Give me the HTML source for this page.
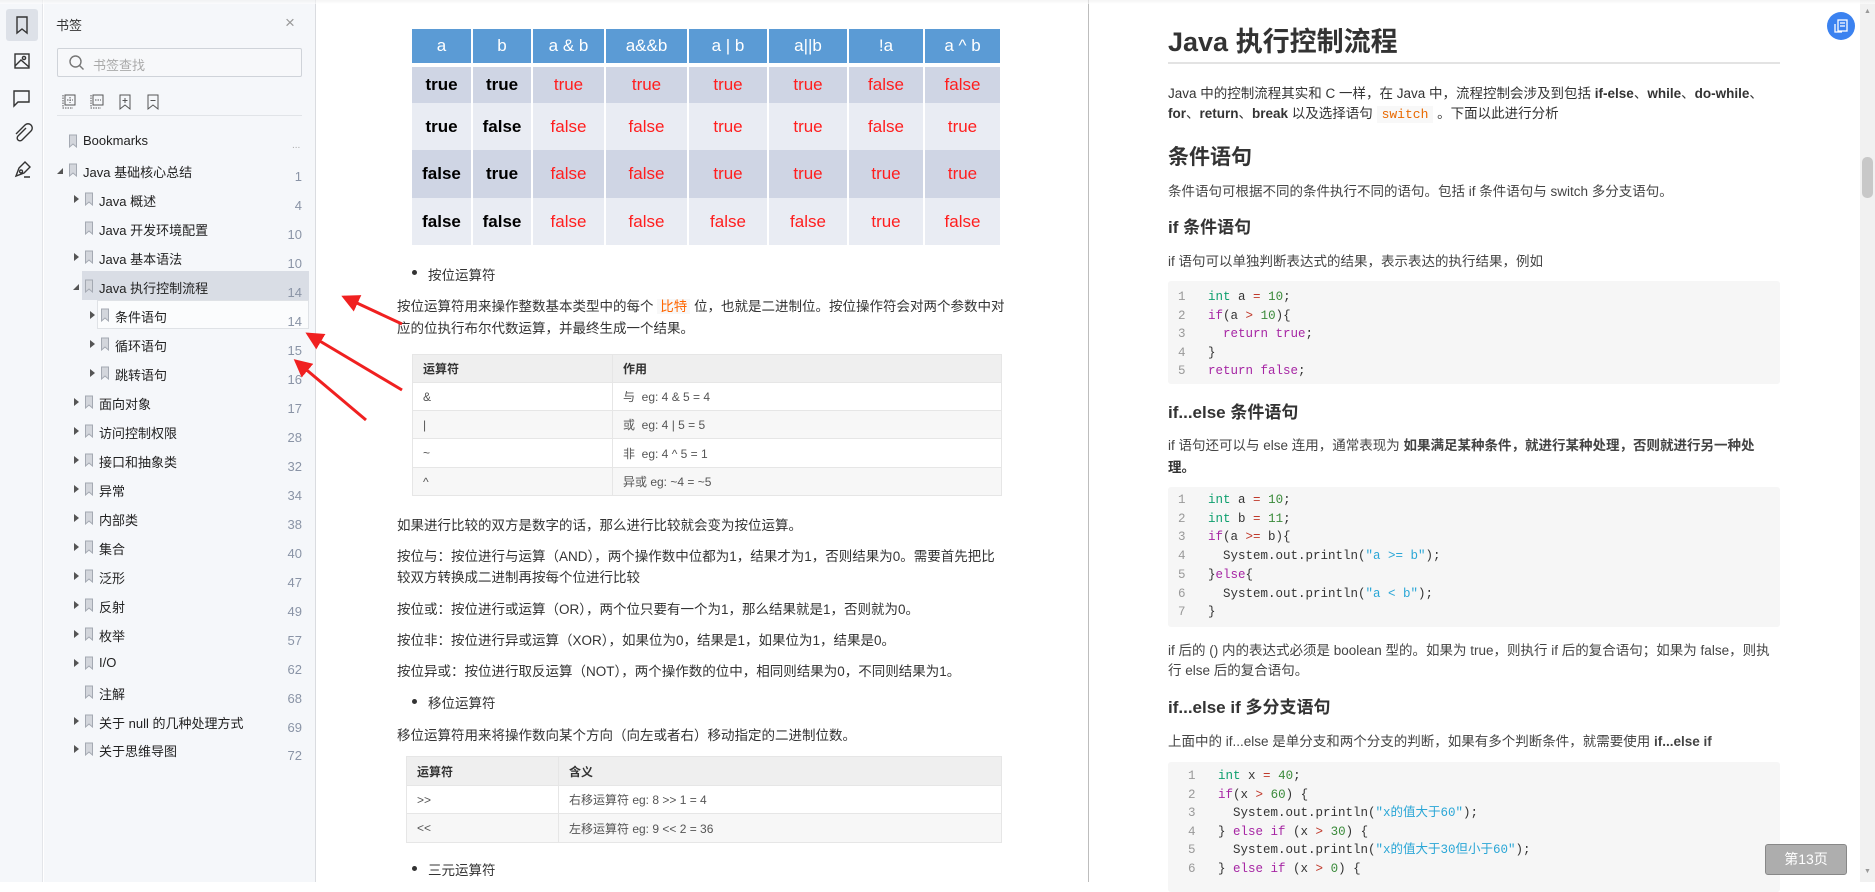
<!DOCTYPE html>
<html><head><meta charset="utf-8">
<style>
*{margin:0;padding:0;box-sizing:border-box}
body{width:1875px;height:882px;overflow:hidden;position:relative;background:#fff;font-family:"Liberation Sans","Noto Sans CJK SC",sans-serif;color:#333}
.a{position:absolute;white-space:nowrap}
#bar{left:0;top:0;width:43px;height:882px;background:#f5f7fa;border-right:1px solid #e3e5e9}
#panel{left:44px;top:0;width:272px;height:882px;background:#f5f7fa;border-right:1px solid #dadce0}
.bm{font-size:13px;color:#222}
.pn{font-size:13px;color:#8a94a6;text-align:right;width:40px}
.tri{width:0;height:0;border-left:5px solid #555;border-top:4px solid transparent;border-bottom:4px solid transparent}
.trid{width:0;height:0;border-right:6px solid #555;border-top:6px solid transparent}
.t1{border-collapse:collapse;position:absolute;left:412px;top:29px;font-family:"Liberation Sans",sans-serif}
.t1 td{text-align:center;font-size:17px;border:2px solid #fff;border-width:0 2px 0 0}
.t1 .h td{background:#5b9bd5;color:#fff;height:36px;font-size:17px;border-bottom:4px solid #fff}
.r{color:#ff1e1e}
.k{color:#000;font-weight:bold}
.tb{position:absolute;border-collapse:collapse;font-size:12px;color:#555}
.tb td{border:1px solid #e6e6e6;padding-left:10px}
.tb tr.hd td{background:#efefef;font-weight:bold;color:#333}
.tb tr:nth-child(odd):not(.hd) td{background:#f7f7f7}
.p{font-size:13.5px;color:#333}
.rp{font-size:13.5px;color:#333}
.code{position:absolute;left:1168px;width:612px;background:#f6f6f6;border-radius:3px;font-family:"Liberation Mono",monospace;font-size:12.5px}
.code div{position:absolute;white-space:pre}
.ln{color:#999}
.kw{color:#a626a4}.ty{color:#0e9f6e}.nu{color:#3a8a3a}.op{color:#c0392b}.st{color:#2aa6d6}
</style></head><body>
<div class="a" style="left:0;top:0;width:1875px;height:4px;background:linear-gradient(#eee,#fff);z-index:5;opacity:.6"></div>
<div class="a" id="bar">
 <div class="a" style="left:6px;top:9px;width:32px;height:32px;background:#dde1e8;border-radius:3px"></div>
 <svg class="a" style="left:0;top:0" width="43" height="190" fill="none" stroke="#333" stroke-width="1.4">
  <path d="M17 17h10v16l-5-4-5 4z"/>
  <rect x="15" y="54" width="14" height="14"/><circle cx="24" cy="58" r="1.6"/><path d="M15 66l6-6 8 7"/>
  <path d="M14 91h15v11H18l-4 4z"/>
  <path d="M26 128l-8 8a2.5 2.5 0 0 0 4 4l9-9a4 4 0 0 0-6-6l-9 9"/>
  <path d="M16 176l3-8 6-6 5 5-6 6-8 3zM21 170a1.5 1.5 0 1 0 .1 0M24 177h6"/>
 </svg>
</div>
<div class="a" id="panel">
 <div class="a" style="left:12px;top:15px;font-size:13px;color:#333">书签</div>
 <div class="a" style="left:241px;top:13px;font-size:17px;color:#999">×</div>
 <div class="a" style="left:13px;top:48px;width:245px;height:29px;border:1px solid #cfd3d9;background:#f7f8fa;border-radius:2px"></div>
 <svg class="a" style="left:24px;top:54px" width="18" height="18" fill="none" stroke="#777" stroke-width="1.4"><circle cx="7.5" cy="7.5" r="5.5"/><path d="M11.5 11.5l4 4"/></svg>
 <div class="a" style="left:49px;top:55px;font-size:13px;color:#aaa">书签查找</div>
 <svg class="a" style="left:16px;top:92px" width="130" height="20" fill="none" stroke="#555" stroke-width="1">
  <rect x="5" y="3" width="10" height="10"/><path d="M10 5v6M7 8h6M3 3v13h10" stroke-dasharray="1.5 1"/>
  <rect x="33" y="3" width="10" height="10"/><path d="M35 8h6M31 3v13h10" stroke-dasharray="1.5 1"/>
  <path d="M60 3h10v14l-5-4-5 4zM65 6v5M62.5 8.5h5"/>
  <path d="M88 3h10v14l-5-4-5 4zM90.5 8.5h5"/>
 </svg>
 <div class="a" style="left:13px;top:115px;width:245px;height:1px;background:#e1e4e8"></div>
 <div class="a" style="left:38px;top:271px;width:227px;height:29px;background:#d9dde5"></div>
 <div class="a" style="left:53px;top:300px;width:212px;height:29px;background:#fbfcfd;border:1px solid #dfe2e6"></div>
 <div class="a" style="left:248px;top:140px;font-size:10px;color:#aaa">...</div>
</div>
<div id="tree"></div>
<div class="a" style="left:1088px;top:0;width:1px;height:882px;background:#bdbdbd"></div>
<table class="t1">
<tr class="h"><td style="width:60px">a</td><td style="width:60px">b</td><td style="width:73px">a &amp; b</td><td style="width:83px">a&amp;&amp;b</td><td style="width:80px">a | b</td><td style="width:80px">a||b</td><td style="width:76px">!a</td><td style="width:77px">a ^ b</td></tr>
<tr style="background:#cfd5e4;height:38px"><td class="k">true</td><td class="k">true</td><td class="r">true</td><td class="r">true</td><td class="r">true</td><td class="r">true</td><td class="r">false</td><td class="r">false</td></tr>
<tr style="background:#e9ecf3;height:47px"><td class="k">true</td><td class="k">false</td><td class="r">false</td><td class="r">false</td><td class="r">true</td><td class="r">true</td><td class="r">false</td><td class="r">true</td></tr>
<tr style="background:#cfd5e4;height:48px"><td class="k">false</td><td class="k">true</td><td class="r">false</td><td class="r">false</td><td class="r">true</td><td class="r">true</td><td class="r">true</td><td class="r">true</td></tr>
<tr style="background:#e9ecf3;height:47px"><td class="k">false</td><td class="k">false</td><td class="r">false</td><td class="r">false</td><td class="r">false</td><td class="r">false</td><td class="r">true</td><td class="r">false</td></tr>
</table>
<div class="a" style="left:412px;top:270px;width:5px;height:5px;border-radius:50%;background:#333"></div>
<div class="a p" style="left:428px;top:264px">按位运算符</div>
<div class="a p" style="left:397px;top:295px">按位运算符用来操作整数基本类型中的每个 <span style="color:#f60;background:#f8f8f8;padding:0 3px">比特</span> 位，也就是二进制位。按位操作符会对两个参数中对</div>
<div class="a p" style="left:397px;top:317px">应的位执行布尔代数运算，并最终生成一个结果。</div>
<table class="tb" style="left:412px;top:354px;width:590px">
<tr class="hd" style="height:28px"><td style="width:200px">运算符</td><td>作用</td></tr>
<tr style="height:28px;background:#fff"><td>&amp;</td><td>与 &nbsp;eg: 4 &amp; 5 = 4</td></tr>
<tr style="height:28px"><td>|</td><td>或 &nbsp;eg: 4 | 5 = 5</td></tr>
<tr style="height:29px"><td>~</td><td>非 &nbsp;eg: 4 ^ 5 = 1</td></tr>
<tr style="height:28px"><td>^</td><td>异或 eg: ~4 = ~5</td></tr>
</table>
<div class="a p" style="left:397px;top:514px">如果进行比较的双方是数字的话，那么进行比较就会变为按位运算。</div>
<div class="a p" style="left:397px;top:545px">按位与：按位进行与运算（AND），两个操作数中位都为1，结果才为1，否则结果为0。需要首先把比</div>
<div class="a p" style="left:397px;top:566px">较双方转换成二进制再按每个位进行比较</div>
<div class="a p" style="left:397px;top:598px">按位或：按位进行或运算（OR），两个位只要有一个为1，那么结果就是1，否则就为0。</div>
<div class="a p" style="left:397px;top:629px">按位非：按位进行异或运算（XOR），如果位为0，结果是1，如果位为1，结果是0。</div>
<div class="a p" style="left:397px;top:660px">按位异或：按位进行取反运算（NOT），两个操作数的位中，相同则结果为0，不同则结果为1。</div>
<div class="a" style="left:412px;top:699px;width:5px;height:5px;border-radius:50%;background:#333"></div>
<div class="a p" style="left:428px;top:692px">移位运算符</div>
<div class="a p" style="left:397px;top:724px">移位运算符用来将操作数向某个方向（向左或者右）移动指定的二进制位数。</div>
<table class="tb" style="left:406px;top:756px;width:596px">
<tr class="hd" style="height:29px"><td style="width:152px">运算符</td><td>含义</td></tr>
<tr style="height:28px;background:#fff"><td>&gt;&gt;</td><td>右移运算符 eg: 8 &gt;&gt; 1 = 4</td></tr>
<tr style="height:29px"><td>&lt;&lt;</td><td>左移运算符 eg: 9 &lt;&lt; 2 = 36</td></tr>
</table>
<div class="a" style="left:412px;top:866px;width:5px;height:5px;border-radius:50%;background:#333"></div>
<div class="a p" style="left:428px;top:859px">三元运算符</div>
<svg class="a" style="left:0;top:0;z-index:4" width="1875" height="882">
 <defs><marker id="m" markerWidth="6" markerHeight="6" refX="5" refY="3" orient="auto"><path d="M0 0L6 3L0 6z" fill="#f02020"/></marker></defs>
 <g stroke="#f02020" stroke-width="3" marker-end="url(#m)">
  <line x1="402" y1="324" x2="344" y2="297"/>
  <line x1="402" y1="390" x2="308" y2="334"/>
  <line x1="366" y1="420" x2="296" y2="361"/>
 </g>
</svg>
<div class="a" style="left:1168px;top:20px;font-size:27px;font-weight:bold;color:#333">Java 执行控制流程</div>
<div class="a" style="left:1168px;top:62px;width:612px;height:2px;background:#e3e3e3"></div>
<div class="a rp" style="left:1168px;top:82px">Java 中的控制流程其实和 C 一样，在 Java 中，流程控制会涉及到包括 <b>if-else</b>、<b>while</b>、<b>do-while</b>、</div>
<div class="a rp" style="left:1168px;top:102px"><b>for</b>、<b>return</b>、<b>break</b> 以及选择语句 <span style="font-family:'Liberation Mono',monospace;color:#e96900;background:#f8f8f8;padding:1px 5px;font-size:13px">switch</span> 。下面以此进行分析</div>
<div class="a" style="left:1168px;top:141px;font-size:21px;font-weight:bold;color:#333">条件语句</div>
<div class="a rp" style="left:1168px;top:180px;color:#444">条件语句可根据不同的条件执行不同的语句。包括 if 条件语句与 switch 多分支语句。</div>
<div class="a" style="left:1168px;top:213px;font-size:17px;font-weight:bold;color:#333">if 条件语句</div>
<div class="a rp" style="left:1168px;top:250px;color:#444">if 语句可以单独判断表达式的结果，表示表达的执行结果，例如</div>
<div class="code" style="top:281px;height:103px">
 <div style="left:10px;top:7px;line-height:18.5px" class="ln">1
2
3
4
5</div>
 <div style="left:40px;top:7px;line-height:18.5px"><span class="ty">int</span> a <span class="op">=</span> <span class="nu">10</span>;
<span class="kw">if</span>(a <span class="op">&gt;</span> <span class="nu">10</span>){
  <span class="kw">return true</span>;
}
<span class="kw">return false</span>;</div>
</div>
<div class="a" style="left:1168px;top:398px;font-size:17px;font-weight:bold;color:#333">if...else 条件语句</div>
<div class="a rp" style="left:1168px;top:434px;color:#444">if 语句还可以与 else 连用，通常表现为 <b>如果满足某种条件，就进行某种处理，否则就进行另一种处</b></div>
<div class="a rp" style="left:1168px;top:456px"><b>理。</b></div>
<div class="code" style="top:487px;height:140px">
 <div style="left:10px;top:4px;line-height:18.7px" class="ln">1
2
3
4
5
6
7</div>
 <div style="left:40px;top:4px;line-height:18.7px"><span class="ty">int</span> a <span class="op">=</span> <span class="nu">10</span>;
<span class="ty">int</span> b <span class="op">=</span> <span class="nu">11</span>;
<span class="kw">if</span>(a <span class="op">&gt;=</span> b){
  System.out.println(<span class="st">"a &gt;= b"</span>);
}<span class="kw">else</span>{
  System.out.println(<span class="st">"a &lt; b"</span>);
}</div>
</div>
<div class="a rp" style="left:1168px;top:639px;color:#444">if 后的 () 内的表达式必须是 boolean 型的。如果为 true，则执行 if 后的复合语句；如果为 false，则执</div>
<div class="a rp" style="left:1168px;top:659px;color:#444">行 else 后的复合语句。</div>
<div class="a" style="left:1168px;top:693px;font-size:17px;font-weight:bold;color:#333">if...else if 多分支语句</div>
<div class="a rp" style="left:1168px;top:730px;color:#444">上面中的 if...else 是单分支和两个分支的判断，如果有多个判断条件，就需要使用 <b>if...else if</b></div>
<div class="code" style="top:762px;height:130px">
 <div style="left:20px;top:5px;line-height:18.6px" class="ln">1
2
3
4
5
6</div>
 <div style="left:50px;top:5px;line-height:18.6px"><span class="ty">int</span> x <span class="op">=</span> <span class="nu">40</span>;
<span class="kw">if</span>(x <span class="op">&gt;</span> <span class="nu">60</span>) {
  System.out.println(<span class="st">"x的值大于60"</span>);
} <span class="kw">else if</span> (x <span class="op">&gt;</span> <span class="nu">30</span>) {
  System.out.println(<span class="st">"x的值大于30但小于60"</span>);
} <span class="kw">else if</span> (x <span class="op">&gt;</span> <span class="nu">0</span>) {</div>
</div>
<div class="a" style="left:1860px;top:0;width:15px;height:882px;background:#f1f1f1"></div>
<div class="a" style="left:1862px;top:157px;width:11px;height:41px;background:#c8c8c8;border-radius:5px"></div>
<div class="a" style="left:1864px;top:8px;font-size:7px;color:#999">▲</div>
<div class="a" style="left:1864px;top:868px;font-size:7px;color:#999">▼</div>
<div class="a" style="left:1827px;top:12px;width:28px;height:28px;border-radius:50%;background:#3b82f0"></div>
<svg class="a" style="left:1833px;top:18px" width="16" height="16" fill="none" stroke="#fff" stroke-width="1.3"><rect x="5" y="2" width="9" height="11"/><path d="M2 6v8h7M7 5h5M7 8h5"/></svg>
<div class="a" style="left:1765px;top:844px;width:82px;height:31px;background:rgba(160,160,160,.85);border:1px solid #888;border-radius:3px;color:#fff;font-size:14px;text-align:center;line-height:29px">第13页</div>
<script>
var items=[["Bookmarks",0,0,"..."],["Java 基础核心总结",0,2,"1"],["Java 概述",1,1,"4"],["Java 开发环境配置",1,0,"10"],["Java 基本语法",1,1,"10"],["Java 执行控制流程",1,2,"14"],["条件语句",2,1,"14"],["循环语句",2,1,"15"],["跳转语句",2,1,"16"],["面向对象",1,1,"17"],["访问控制权限",1,1,"28"],["接口和抽象类",1,1,"32"],["异常",1,1,"34"],["内部类",1,1,"38"],["集合",1,1,"40"],["泛形",1,1,"47"],["反射",1,1,"49"],["枚举",1,1,"57"],["I/O",1,1,"62"],["注解",1,0,"68"],["关于 null 的几种处理方式",1,1,"69"],["关于思维导图",1,1,"72"]];
var h="";
items.forEach(function(it,i){
 var y=141+i*29; if(i==21)y=749;
 var ind=it[1]*16;
 if(it[2]==1)h+='<div class="a tri" style="left:'+(58+ind)+'px;top:'+(y-4)+'px"></div>';
 if(it[2]==2)h+='<div class="a trid" style="left:'+(57+ind)+'px;top:'+(y-2)+'px"></div>';
 h+='<svg class="a" style="left:'+(68+ind)+'px;top:'+(y-7)+'px" width="10" height="14"><path d="M1.5 1h7v12l-3.5-3-3.5 3z" fill="#d3d6dc" stroke="#a4a9b2" stroke-width="1"/></svg>';
 h+='<div class="a bm" style="left:'+(83+ind)+'px;top:'+(y-8)+'px">'+it[0]+'</div>';
 if(i>0)h+='<div class="a pn" style="left:262px;top:'+(y-1)+'px">'+it[3]+'</div>';
});
document.getElementById("tree").innerHTML=h;
</script>
</body></html>
